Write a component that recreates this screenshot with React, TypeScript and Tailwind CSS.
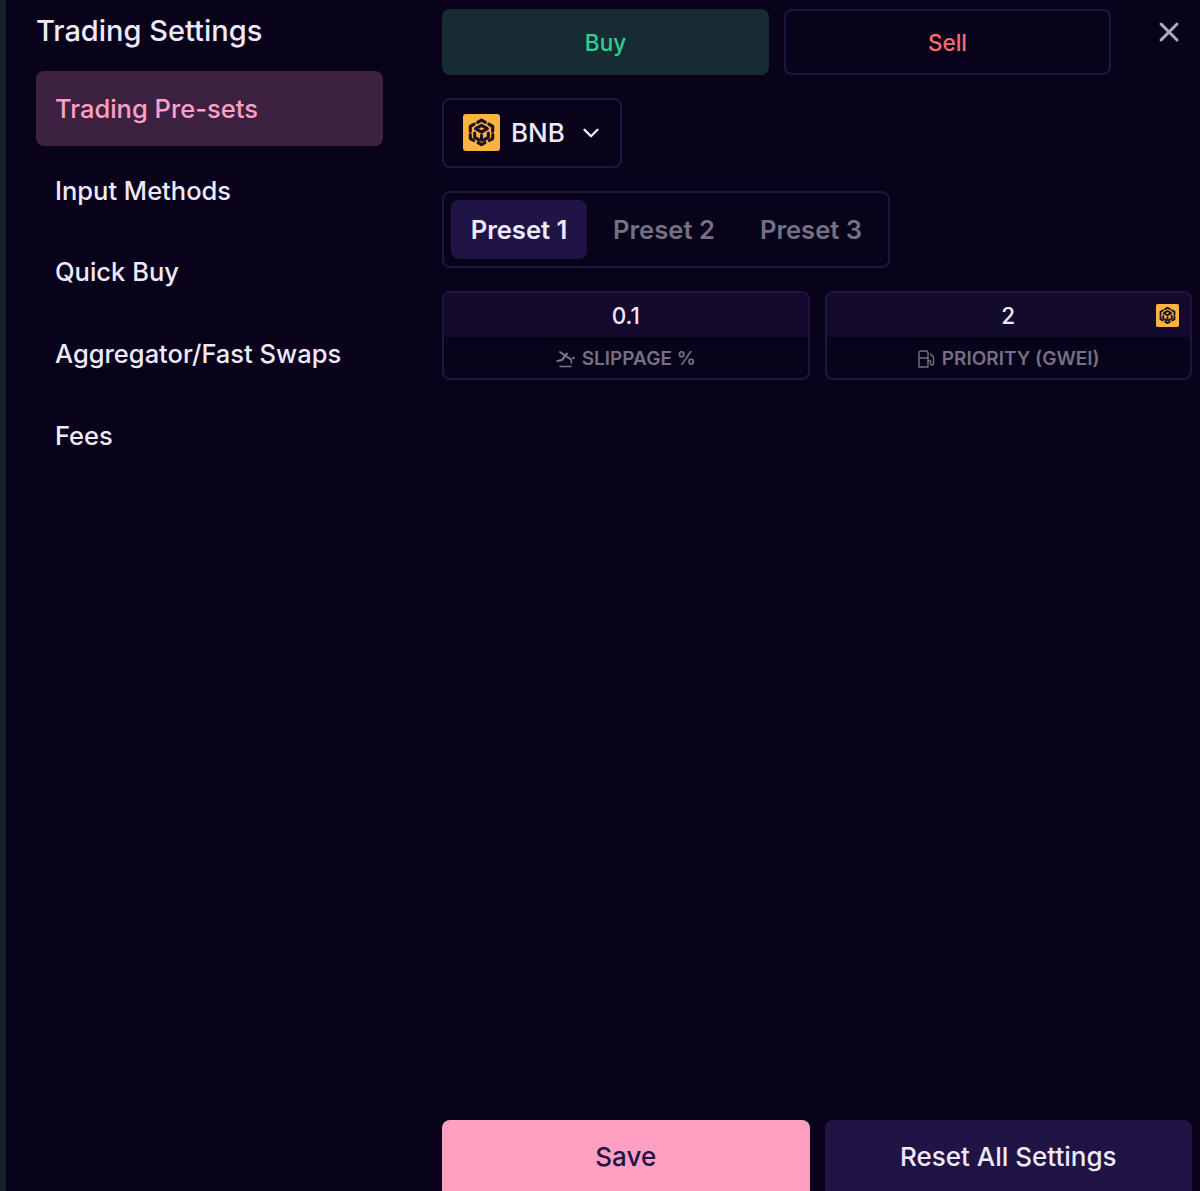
import { ChevronDown, X } from "lucide-react";

function BnbLogo({ size }: { size: number }) {
  return (
    <svg width={size} height={size} viewBox="0 0 38 38" className="shrink-0">
      <rect width="38" height="38" rx="3" fill="#fdb43f" />
      <g fill="none" stroke="#1a1020" strokeWidth="3.2" strokeLinejoin="round" strokeLinecap="round">
        <path d="M15 8.5 19 6.2l4 2.3" />
        <path d="M26.5 10.5l4 2.3v5" />
        <path d="M11.5 10.5l-4 2.3v5" />
        <path d="M7.5 21v4.2l3.5 2" />
        <path d="M30.5 21v4.2l-3.5 2" />
        <path d="M15.5 29.5l3.5 2 3.5-2" />
        <path d="M13 15l6-3.4 6 3.4-6 3.6z" />
        <path d="M12 19.5v4.5l4.5 2.6" />
        <path d="M26 19.5v4.5l-4.5 2.6" />
        <path d="M19 22v5" />
      </g>
    </svg>
  );
}

function SlippageIcon() {
  return (
    <svg width="19" height="18" viewBox="0 0 19 18" fill="none" stroke="#7a7588" strokeWidth="2.1" strokeLinecap="round" strokeLinejoin="round" className="shrink-0">
      <path d="M4 2l11 7.5" />
      <path d="M1.5 11 6 10l5-6.5" />
      <path d="M15 9.5l.5 3.5" strokeWidth="1.5" />
      <circle cx="17.5" cy="8" r=".7" strokeWidth="1.2" />
      <path d="M4 16.5h11" strokeWidth="1.3" />
    </svg>
  );
}

function PumpIcon() {
  return (
    <svg width="18" height="18" viewBox="0 0 18 18" fill="none" stroke="#757083" strokeWidth="1.4" strokeLinecap="round" strokeLinejoin="round" className="shrink-0">
      <path d="M2 17V3a2 2 0 0 1 2-2h5a2 2 0 0 1 2 2v14z" />
      <path d="M2 8h9" />
      <path d="M13.5 4l3 3v6.5a1.5 1.5 0 0 1-3 0V11H11" />
    </svg>
  );
}

const menu = ["Trading Pre-sets", "Input Methods", "Quick Buy", "Aggregator/Fast Swaps", "Fees"];

export default function App() {
  return (
    <div className="flex h-[1191px] overflow-hidden bg-[#08021a] font-['Inter',sans-serif] text-[#efe9fc]">
      <div className="w-[6px] shrink-0 bg-[#14222f]" />

      <aside className="w-[377px] shrink-0 pl-[30px]">
        <h1 className="mt-[11px] h-[40px] text-[29px] leading-[40px] font-medium">Trading Settings</h1>
        <nav className="mt-[20px] flex flex-col gap-[6.75px]">
          {menu.map((item, i) => (
            <div
              key={item}
              className={
                i === 0
                  ? "flex h-[75px] items-center rounded-lg bg-[#3c2240] pt-[1px] pl-[19px] text-[25.5px] font-medium text-[#ff9fc5]"
                  : "flex h-[75px] items-center pt-[1px] pl-[19px] text-[25.5px] font-medium"
              }
            >
              {item}
            </div>
          ))}
        </nav>
      </aside>

      <main className="ml-[59px] flex w-[750px] shrink-0 flex-col">
        <div className="mt-[9px] flex items-start">
          <button className="h-[66px] w-[327px] rounded-lg bg-[#172b33] pt-[1px] text-[22.5px] font-medium text-[#2dd197]">Buy</button>
          <button className="ml-[15px] h-[66px] w-[327px] rounded-lg border-2 border-[#1f1640] pt-[1px] text-[22.5px] font-medium text-[#ff6b6f]">Sell</button>
          <X size={32} strokeWidth={2.2} className="mt-[7px] ml-[42px] text-[#b0aabd]" />
        </div>

        <div className="mt-[23px] flex h-[70px] w-[180px] items-center rounded-lg border-2 border-[#1f1640] pb-[1px] pl-[19px]">
          <BnbLogo size={37} />
          <span className="ml-[11px] text-[26px] font-medium">BNB</span>
          <ChevronDown size={26} strokeWidth={2.2} className="ml-[13px]" />
        </div>

        <div className="mt-[23px] flex h-[77px] w-[448px] items-center rounded-lg border-2 border-[#1f1640] pl-[7px] text-[25.6px] font-semibold">
          <div className="flex h-[59px] w-[136px] items-center justify-center rounded-lg bg-[#201444] pt-[1px]">Preset 1</div>
          <div className="ml-[26px] pt-[1px] text-[#757083]">Preset 2</div>
          <div className="ml-[45px] pt-[1px] text-[#757083]">Preset 3</div>
        </div>

        <div className="mt-[23px] grid grid-cols-2 gap-[15px]">
          <div className="h-[89px] overflow-hidden rounded-lg border-2 border-[#1f1640]">
            <div className="flex h-[44px] items-center justify-center bg-[#130a2e] pt-[1px] text-[22.5px] font-medium">0.1</div>
            <div className="flex h-[41px] items-center justify-center gap-[7px] pt-[3px] text-[19px] font-semibold text-[#757083]">
              <SlippageIcon />
              SLIPPAGE %
            </div>
          </div>
          <div className="h-[89px] overflow-hidden rounded-lg border-2 border-[#1f1640]">
            <div className="relative flex h-[44px] items-center justify-center bg-[#130a2e] pt-[1px] text-[22.5px] font-medium">
              2
              <span className="absolute top-[11px] right-[11px]">
                <BnbLogo size={23} />
              </span>
            </div>
            <div className="flex h-[41px] items-center justify-center gap-[7px] pt-[3px] text-[19px] font-semibold text-[#757083]">
              <PumpIcon />
              PRIORITY (GWEI)
            </div>
          </div>
        </div>

        <div className="mt-auto grid grid-cols-2 gap-[15px]">
          <button className="h-[71px] rounded-t-lg bg-[#ff9fc2] pt-[2px] text-[26px] font-medium text-[#201444]">Save</button>
          <button className="h-[71px] rounded-t-lg bg-[#201444] pt-[2px] text-[26px] font-medium">Reset All Settings</button>
        </div>
      </main>
    </div>
  );
}
